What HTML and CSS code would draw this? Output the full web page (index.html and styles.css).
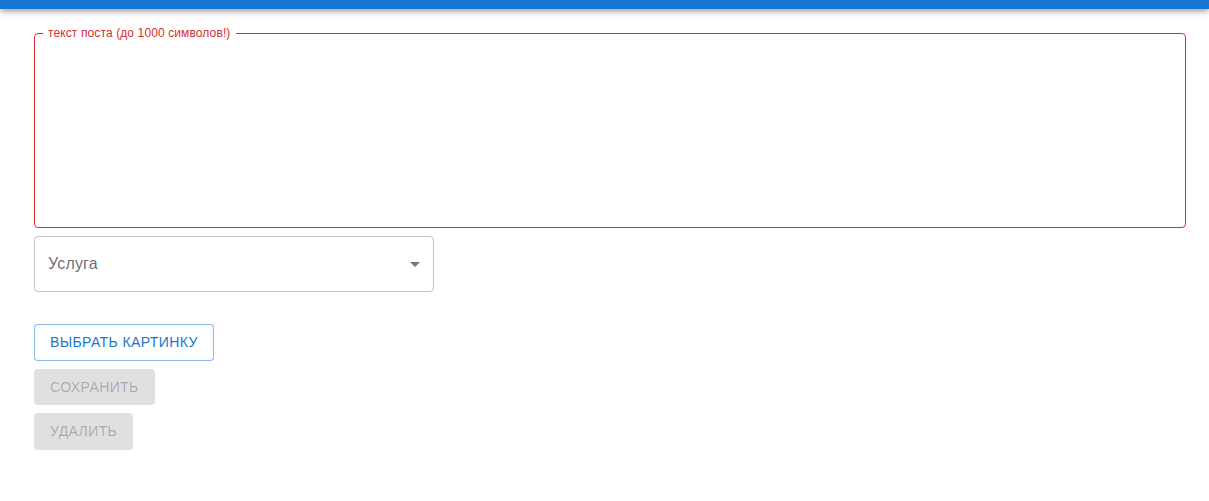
FILE: index.html
```html
<!DOCTYPE html>
<html lang="ru">
<head>
<meta charset="utf-8">
<title>Пост</title>
<link rel="stylesheet" href="styles.css">
</head>
<body>
<header class="appbar"></header>
<main class="content">
  <fieldset class="field field-error">
    <legend class="legend">текст поста (до 1000 символов!)</legend>
    <textarea class="textarea"></textarea>
  </fieldset>
  <div class="select">
    <span class="select-label">Услуга</span>
    <svg class="select-icon" viewBox="0 0 24 24" width="24" height="24"><path d="M7 10l5 5 5-5z"/></svg>
  </div>
  <div class="actions">
    <button class="btn btn-outlined">Выбрать картинку</button>
    <button class="btn btn-disabled" disabled>Сохранить</button>
    <button class="btn btn-disabled" disabled>Удалить</button>
  </div>
</main>
</body>
</html>
```

FILE: styles.css
```css
* { box-sizing: border-box; }
html, body { margin: 0; padding: 0; background: #fff; }
body { font-family: "Liberation Sans", Arial, sans-serif; color: rgba(0,0,0,0.87); }

.appbar {
  height: 9px;
  background: #1976d2;
  box-shadow: 0 2px 4px -1px rgba(0,0,0,0.2), 0 4px 5px 0 rgba(0,0,0,0.14), 0 1px 10px 0 rgba(0,0,0,0.12);
}

.content {
  padding: 17px 23px 0 34px;
  display: flex;
  flex-direction: column;
  align-items: flex-start;
}

.field {
  margin: 0;
  width: 100%;
  height: 202px;
  border: 1px solid #d32f2f;
  border-radius: 4px;
  padding: 0 14px;
  display: flex;
}
.legend {
  font-size: 12px;
  line-height: 14px;
  color: #d32f2f;
  padding: 0 6px 0 5px;
  margin-left: -6px;
  letter-spacing: 0.00938em;
}
.textarea {
  flex: 1;
  border: 0;
  outline: none;
  resize: none;
  background: transparent;
  font: inherit;
}

.select {
  margin-top: 8px;
  width: 400px;
  height: 56px;
  border: 1px solid rgba(0,0,0,0.23);
  border-radius: 4px;
  display: flex;
  align-items: center;
  justify-content: space-between;
  padding: 0 6px 0 13px;
}
.select-label {
  font-size: 16px;
  color: rgba(0,0,0,0.6);
  letter-spacing: 0.00938em;
}
.select-icon { fill: rgba(0,0,0,0.54); }

.actions {
  margin-top: 32px;
  display: flex;
  flex-direction: column;
  align-items: flex-start;
  gap: 8px;
}
.btn {
  font-family: inherit;
  font-size: 14px;
  font-weight: 400;
  letter-spacing: 0.02857em;
  text-transform: uppercase;
  height: 36.5px;
  border-radius: 4px;
  line-height: 24px;
}
.btn-outlined {
  background: #fff;
  color: #1976d2;
  border: 1px solid rgba(25,118,210,0.5);
  padding: 5px 15px;
}
.btn-disabled {
  background: rgba(0,0,0,0.12);
  color: rgba(0,0,0,0.26);
  border: 0;
  padding: 6px 16px;
}
```
